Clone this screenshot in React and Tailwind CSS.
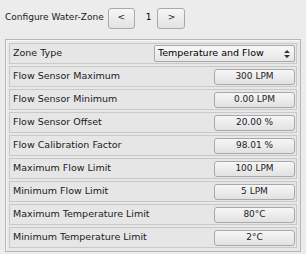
import React from 'react';

const font = { fontFamily: '"DejaVu Sans", Verdana, sans-serif' };

const rows = [
  ['Flow Sensor Maximum', '300 LPM'],
  ['Flow Sensor Minimum', '0.00 LPM'],
  ['Flow Sensor Offset', '20.00 %'],
  ['Flow Calibration Factor', '98.01 %'],
  ['Maximum Flow Limit', '100 LPM'],
  ['Minimum Flow Limit', '5 LPM'],
  ['Maximum Temperature Limit', '80°C'],
  ['Minimum Temperature Limit', '2°C'],
];

/* ── Qt-ish push button ── */
const Btn = ({ children, className = '' }) => (
  <button
    className={`flex items-center justify-center rounded-[3px] border border-[#a9a9a9] bg-gradient-to-b from-[#f6f6f6] to-[#e2e2e2] text-[9px] text-[#222] ${className}`}
  >
    {children}
  </button>
);

const Row = ({ label, children }) => (
  <div className="flex h-[21px] items-center justify-between border border-[#c9c9c9] bg-[#e6e6e6] pl-[3px] pr-[1px]">
    <span className="text-[#1a1a1a]">{label}</span>
    {children}
  </div>
);

export default function App() {
  return (
    <div className="h-[254px] w-[306px] overflow-hidden bg-[#ececec] text-[9.5px]" style={font}>
      <div className="flex h-[36px] items-center pl-[5px]">
        <span className="text-[9px] text-[#1a1a1a]">Configure Water-Zone</span>
        <Btn className="ml-[4px] h-[21px] w-[27px] text-[8px]">&lt;</Btn>
        <span className="ml-[11px] mr-[6px] text-[9px]">1</span>
        <Btn className="h-[21px] w-[28px] text-[8px]">&gt;</Btn>
      </div>
      <div className="mx-[5px] mt-[3px] flex flex-col gap-[2px] border border-[#b5b5b5] bg-[#e8e8e8] p-[3px] shadow-[inset_1px_1px_0_#f8f8f8]">
        <Row label="Zone Type">
          <div className="flex h-[17px] w-[141px] items-center justify-between rounded-[2px] border border-[#a9a9a9] bg-gradient-to-b from-[#f8f8f8] to-[#e6e6e6] pl-[3px] pr-[4px]">
            <span>Temperature and Flow</span>
            <svg width="6" height="10" viewBox="0 0 6 10">
              <path d="M0 4 L3 1 L6 4 Z M0 6 L3 9 L6 6 Z" fill="#333" />
            </svg>
          </div>
        </Row>
        {rows.map(([l, v]) => (
          <Row key={l} label={l}>
            <Btn className="h-[16px] w-[81px]">{v}</Btn>
          </Row>
        ))}
      </div>
    </div>
  );
}
